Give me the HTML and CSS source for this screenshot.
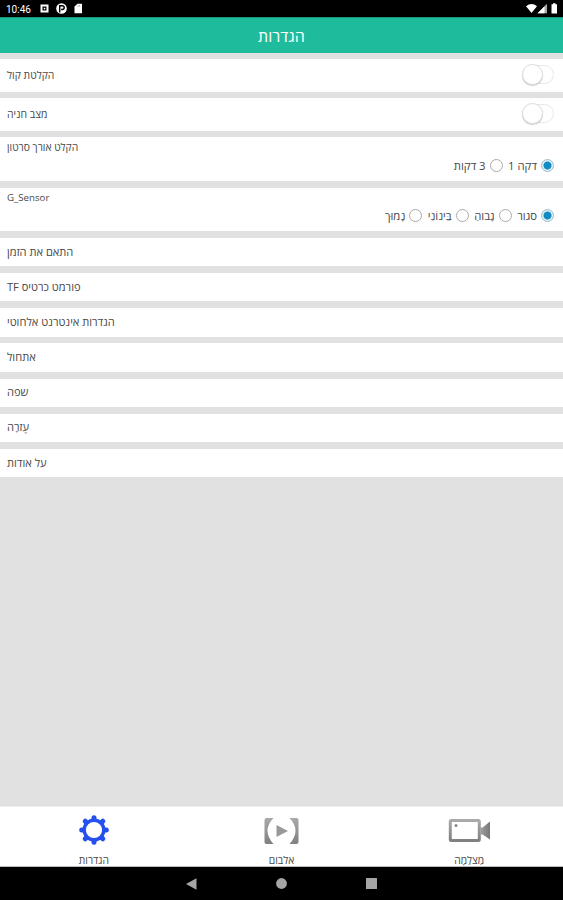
FILE: index.html
```html
<!DOCTYPE html>
<html lang="he">
<head>
    <meta charset="utf-8">
    <meta name="viewport" content="width=device-width, initial-scale=1.0">
    <title>הגדרות</title>
    <link rel="stylesheet" href="styles.css">
</head>
<body>
    <div class="status">
        <span class="time">10:46</span>
        <svg class="left-icons" width="44" height="12" viewBox="0 0 44 12">
            <path fill="#fff" fill-rule="evenodd" d="M1.500 1.500h8v8h-8zM3.500 3.500v4h4v-4z"/>
            <path fill="#fff" d="M4.800 4.800h1.500v1.500H4.800z"/>
            <circle cx="22.500" cy="5.500" r="5.300" fill="#fff"/>
            <path d="M20.700 9.500V2.700h2.600a1.900 1.900 0 0 1 0 3.800h-1.200" fill="none" stroke="#000" stroke-width="1.400"/>
            <path fill="#fff" d="M38.500.8H43v9.400h-7.500V3.500z"/>
            <path d="M39 2v1.600M40.600 2v1.600" stroke="#777" stroke-width=".6"/>
        </svg>
        <svg class="right-icons" width="34" height="12" viewBox="0 0 34 12">
            <path fill="#fff" d="M1 3.300Q6.500-1.300 12 3.300L6.500 10z"/>
            <path fill="#aaa" d="M22 .8v9.400h-9.400z"/>
            <path fill="#fff" d="M19.500 3.300v6.900h-6.900z"/>
            <path fill="#fff" d="M26.500 1.300h1.500V.3h2.500v1H32v9.200h-5.500z"/>
        </svg>
    </div>
    <header>
        <h1>הגדרות</h1>
    </header>
    <main>
        <div class="row switch-row"><p>הקלטת קול</p><span class="switch"></span></div>
        <div class="row switch-row"><p>מצב חניה</p><span class="switch"></span></div>
        <div class="row radio-row">
            <p>הקלט אורך סרטון</p>
            <div class="radios">
                <span class="radio checked"></span><span class="option">דקה 1</span>
                <span class="radio"></span><span class="option">3 דקות</span>
            </div>
        </div>
        <div class="row radio-row">
            <p class="sensor">G_Sensor</p>
            <div class="radios">
                <span class="radio checked"></span><span class="option">סגור</span>
                <span class="radio"></span><span class="option">גָבוהַ</span>
                <span class="radio"></span><span class="option">בֵּינוֹנִי</span>
                <span class="radio"></span><span class="option">נָמוּך</span>
            </div>
        </div>
        <div class="row"><p>התאם את הזמן</p></div>
        <div class="row"><p>פורמט כרטיס TF</p></div>
        <div class="row"><p>הגדרות אינטרנט אלחוטי</p></div>
        <div class="row"><p>אתחול</p></div>
        <div class="row"><p>שפה</p></div>
        <div class="row"><p>עֶזרָה</p></div>
        <div class="row"><p>על אודות</p></div>
    </main>
    <footer>
        <div class="tab">
            <svg width="32" height="32" viewBox="-16 -16 32 32">
                <g stroke="#2450f0" stroke-width="5" stroke-linecap="round">
                    <path d="M0-12.300V12.300M-12.300 0H12.300M-8.800-8.800L8.800 8.800M-8.800 8.800L8.800-8.800"/>
                </g>
                <circle r="9.800" fill="#fff" stroke="#2450f0" stroke-width="3.400"/>
            </svg>
            <span>הגדרות</span>
        </div>
        <div class="tab">
            <svg width="36" height="32" viewBox="0 0 36 32">
                <defs>
                    <linearGradient id="gray" x1="0" y1="0" x2="0" y2="1">
                        <stop offset="0" stop-color="#aaa"/>
                        <stop offset="1" stop-color="#808080"/>
                    </linearGradient>
                </defs>
                <path fill="url(#gray)" d="M1.500 6Q1.500 4 3.500 4h7Q-1.500 16.500 10.500 30h-7Q1.500 30 1.500 28zM35.500 6Q35.500 4 33.500 4h-7Q38.500 16.500 26.500 30h7Q35.500 30 35.500 28z"/>
                <path fill="#999" d="M13.500 11L25 17l-11.500 6z"/>
            </svg>
            <span>אלבום</span>
        </div>
        <div class="tab">
            <svg width="44" height="32" viewBox="0 0 44 32">
                <defs>
                    <linearGradient id="shade" x1="0" y1="0" x2="1" y2="0">
                        <stop offset="0" stop-color="#a0a0a0"/>
                        <stop offset="1" stop-color="#777"/>
                    </linearGradient>
                </defs>
                <rect x="3.300" y="6.500" width="29" height="20" rx="1" fill="#fff" stroke="url(#gray)" stroke-width="3"/>
                <path fill="url(#shade)" d="M33.500 13.500h2l7.500-6v18l-7.500-5h-2z"/>
                <circle cx="9" cy="11.500" r="1.500" fill="#888"/>
            </svg>
            <span>מַצלֵמָה</span>
        </div>
    </footer>
    <nav>
        <svg width="12" height="12" viewBox="0 0 12 12"><path fill="#a6a6a6" d="M10.500.2v11.600L0 6z"/></svg>
        <svg width="12" height="12" viewBox="0 0 12 12"><circle cx="5.500" cy="5.500" r="5.400" fill="#a6a6a6"/></svg>
        <svg width="12" height="12" viewBox="0 0 12 12"><rect width="11" height="11" rx=".5" fill="#a6a6a6"/></svg>
    </nav>
</body>
</html>
```
FILE: styles.css
```css
*{
    box-sizing: border-box;
}
body{
    margin: 0;
    height: 900px;
    display: flex;
    flex-direction: column;
    background-color: #e1e1e1;
    color: #484848;
    font-family: "Open Sans", "Liberation Sans", sans-serif;
    font-size: 11.1px;
    overflow: hidden;
}
p{
    margin: 0;
    line-height: 14px;
    direction: rtl;
}
.status{
    height: 17px;
    background-color: black;
    color: white;
    display: flex;
    align-items: center;
    padding: 1px 4px 0 6px;
}
.time{
    font-family: Roboto, sans-serif;
    font-size: 10px;
    width: 33px;
}
.right-icons{
    margin-left: auto;
}
header{
    height: 36px;
    background-color: #1ebc9c;
    border-top: 1px solid #16977c;
    color: white;
    display: flex;
    align-items: center;
    justify-content: center;
}
h1{
    margin: 0;
    font-size: 16px;
    line-height: 20px;
    font-weight: normal;
}
main{
    flex: 1;
    display: flex;
    flex-direction: column;
    gap: 6.7px;
    padding-top: 6px;
}
.row{
    height: 28.5px;
    flex-shrink: 0;
    background-color: white;
    display: flex;
    align-items: center;
    padding: 0 9px 1px 7px;
}
.switch-row{
    height: 32.5px;
    justify-content: space-between;
    font-size: 10.4px;
}
.switch{
    width: 32px;
    height: 19px;
    border: 1px solid #e8e8e8;
    border-radius: 10px;
    display: flex;
    align-items: center;
}
.switch::before{
    content: "";
    width: 19px;
    height: 19px;
    margin-left: -1px;
    border-radius: 50%;
    background-color: white;
    border: 1px solid #ddd;
    box-shadow: 0 1px 1px #ccc;
}
.radio-row{
    height: 43.5px;
    flex-direction: column;
    align-items: flex-start;
    padding-top: 3px;
    font-size: 10.3px;
}
.sensor{
    font-size: 9.7px;
}
.radios{
    display: flex;
    align-items: center;
    align-self: stretch;
    direction: rtl;
    height: 14px;
    margin-top: 4px;
    font-size: 11.3px;
}
.radio{
    width: 13px;
    height: 13px;
    border: 1px solid #aaa;
    border-radius: 50%;
    background-color: white;
}
.checked{
    border-color: #9bbccb;
    background: radial-gradient(circle, #118bc4 3.5px, #e2f0f6 4.5px);
}
.option{
    margin-right: 4px;
    margin-left: 5.5px;
    white-space: nowrap;
}
footer{
    height: 61px;
    background-color: white;
    border-top: 1px solid #eee;
    border-bottom: 1px solid #bbb;
    display: grid;
    grid-template-columns: 1fr 1fr 1fr;
}
.tab{
    display: flex;
    flex-direction: column;
    align-items: center;
    padding-top: 7px;
}
.tab span{
    font-size: 10.3px;
    line-height: 14px;
    margin-top: 7px;
}
nav{
    height: 33px;
    background-color: black;
    display: flex;
    align-items: center;
    justify-content: center;
    gap: 78px;
}
```
